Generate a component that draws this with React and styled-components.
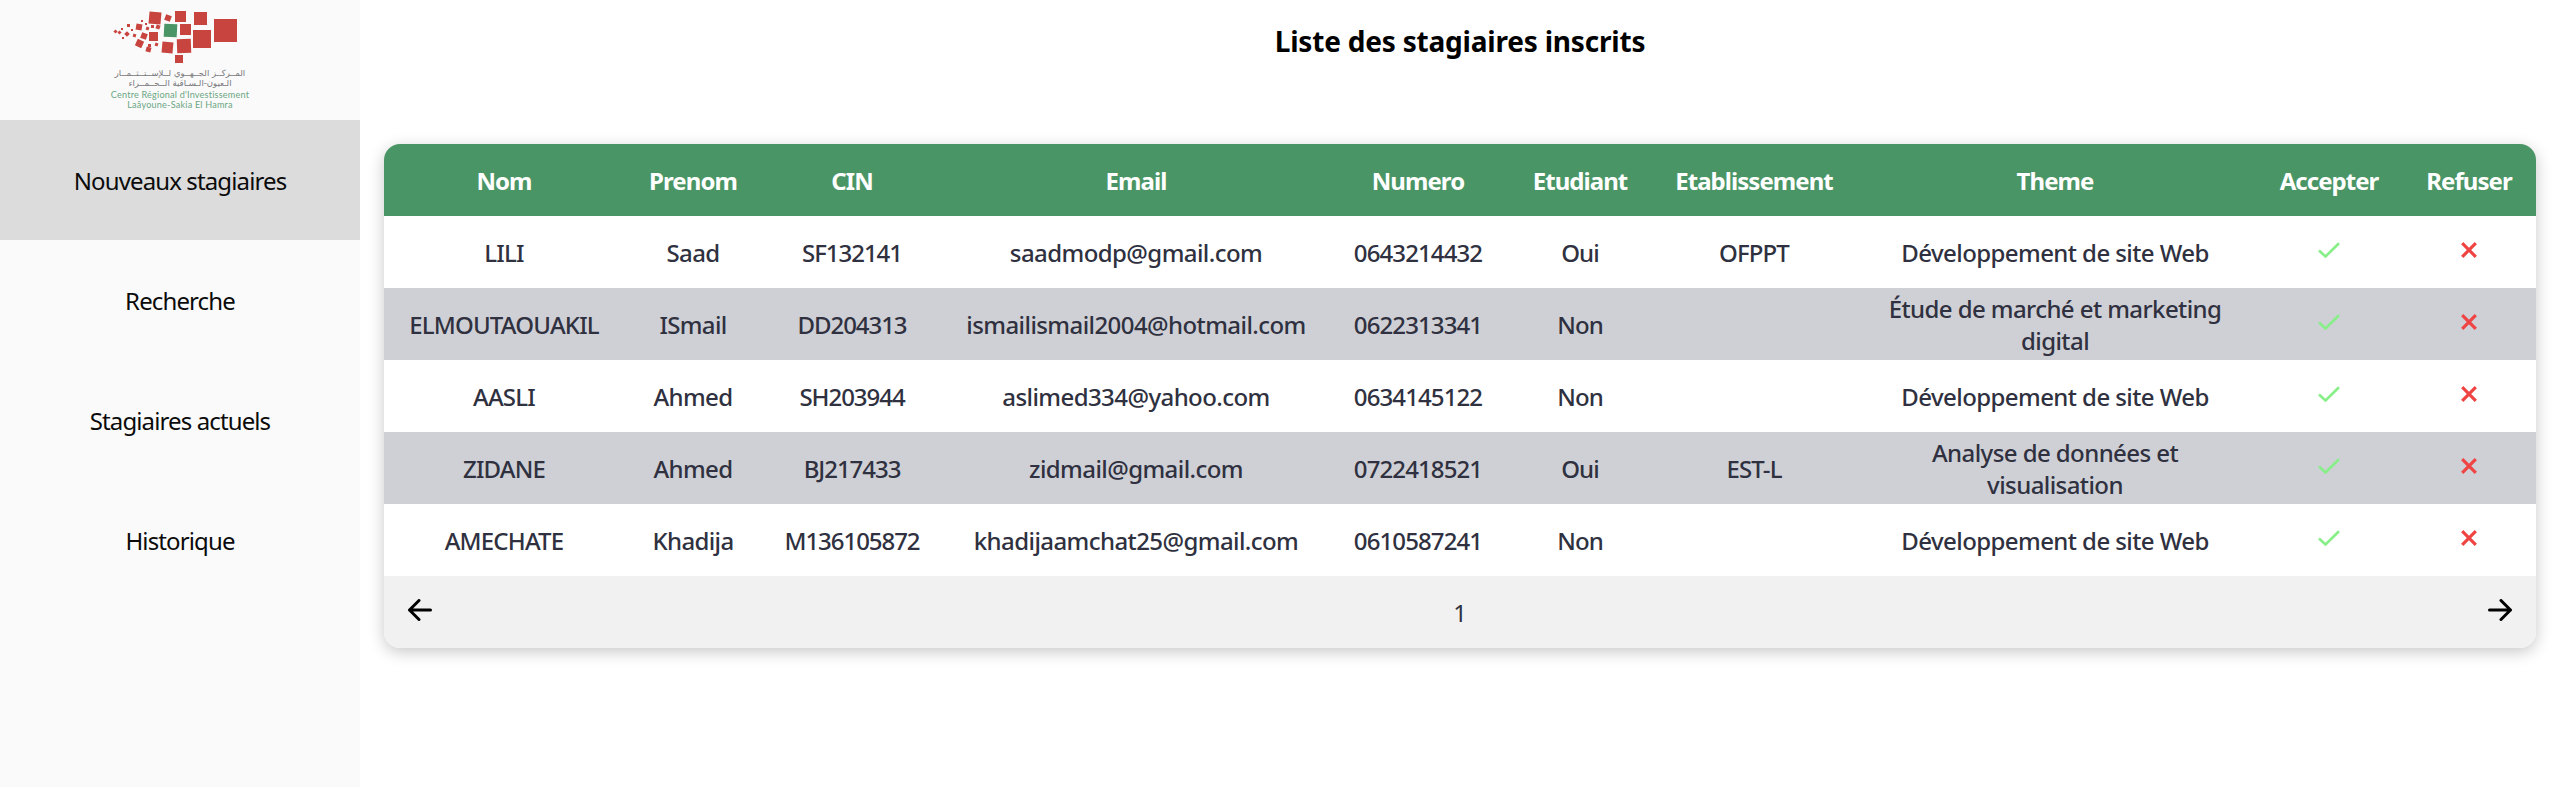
import React from "react";
import styled, { createGlobalStyle } from "styled-components";

const Global = createGlobalStyle`
  html, body { margin: 0; padding: 0; background: #fff; }
  body { font-family: "Noto Sans", "Open Sans", sans-serif; }
`;
const Page = styled.div`display: flex; width: 2560px; height: 787px; overflow: hidden;`;
const Sidebar = styled.aside`width: 360px; flex: none; background: #fafafa; display: flex; flex-direction: column;`;
const LogoBox = styled.div`height: 120px; display: flex; flex-direction: column; align-items: center; position: relative;`;
const ArabicLine = styled.div`
  font-family: "DejaVu Sans", sans-serif; font-size: 8.5px; line-height: 10px; color: #77777a; white-space: nowrap; direction: rtl;
  height: 10px;
`;
const LatinLine = styled.div`
  font-family: "Lato", sans-serif; font-size: 9.1px; line-height: 10px; color: #6aa682; white-space: nowrap; letter-spacing: 0.2px;
`;
const LogoText = styled.div`margin-top: 1px; display: flex; flex-direction: column; align-items: center; gap: 0;`;
const LatinBlock = styled.div`margin-top: 2px; display: flex; flex-direction: column; align-items: center;`;
const NavItem = styled.div`
  height: 120px; display: flex; align-items: center; justify-content: center; font-size: 24px; letter-spacing: -0.88px; color: #0b0b0b;
  background: ${p => p.$active ? "#dcdcdc" : "transparent"};
`;
const Main = styled.main`flex: 1; padding: 0 24px; display: flex; flex-direction: column; align-items: stretch;`;
const Title = styled.h1`margin: 0; height: 144px; padding-top: 21px; box-sizing: border-box; text-align: center; font-size: 28px; line-height: 40px; font-weight: 700; letter-spacing: -0.2px; color: #000;`;
const Card = styled.div`border-radius: 16px; overflow: hidden; box-shadow: 0 4px 16px rgba(0,0,0,.22); background: #fff;`;
const Table = styled.table`width: 2152px; table-layout: fixed; border-collapse: collapse; font-size: 24px;`;
const HeadRow = styled.tr`background: #4a9565; height: 72px;`;
const Th = styled.th`color: #fff; font-weight: 700; padding: 2px 0 0; text-align: center; line-height: 32px; letter-spacing: -0.95px;`;
const Row = styled.tr`height: 72px; background: ${p => p.$alt ? "#cfd0d6" : "#fff"};`;
const Td = styled.td`
  color: #2f3140; padding: 2px 16px 0; text-align: center; line-height: 32px; font-weight: 500;
  letter-spacing: ${p => p.$track}px; white-space: ${p => p.$wrap ? "normal" : "nowrap"};
`;
const IconCell = styled.td`padding: 0 0 4px; text-align: center; vertical-align: middle; line-height: 0;`;
const Footer = styled.div`height: 72px; background: #f1f1f1; display: flex; align-items: center; justify-content: space-between; padding: 0 24px; box-sizing: border-box; width: 100%;`;
const PageNum = styled.span`font-size: 24px; color: #2f3140;`;
const ArrowBtn = styled.span`display: flex; margin-top: -4px;`;

const widths = [240, 138, 180, 388, 176, 148, 200, 402, 146, 134];
const tracks = [-0.82, -0.65, -1.05, -0.58, -0.9, -0.9, -0.9, -0.58];
const heads = ["Nom","Prenom","CIN","Email","Numero","Etudiant","Etablissement","Theme","Accepter","Refuser"];
const rows = [
  ["LILI","Saad","SF132141","saadmodp@gmail.com","0643214432","Oui","OFPPT","Développement de site Web"],
  ["ELMOUTAOUAKIL","ISmail","DD204313","ismailismail2004@hotmail.com","0622313341","Non","","Étude de marché et marketing digital"],
  ["AASLI","Ahmed","SH203944","aslimed334@yahoo.com","0634145122","Non","","Développement de site Web"],
  ["ZIDANE","Ahmed","BJ217433","zidmail@gmail.com","0722418521","Oui","EST-L","Analyse de données et visualisation"],
  ["AMECHATE","Khadija","M136105872","khadijaamchat25@gmail.com","0610587241","Non","","Développement de site Web"],
];

const Check = () => (
  <svg width="22" height="16" viewBox="0 0 22 16" fill="none" stroke="#86ef88" strokeWidth="2.6">
    <path d="M1 8.5 L7.5 14.5 L21 1.2" />
  </svg>
);
const Cross = () => (
  <svg width="16" height="16" viewBox="0 0 16 16" fill="none" stroke="#ef4444" strokeWidth="3.2">
    <path d="M1.2 1.2 L14.8 14.8 M14.8 1.2 L1.2 14.8" />
  </svg>
);
const Arrow = ({ left }) => (
  <svg width="24" height="22" viewBox="0 0 24 22" fill="none" stroke="#000" strokeWidth="3" strokeLinecap="round" strokeLinejoin="round" style={left ? { transform: "scaleX(-1)" } : undefined}>
    <path d="M1.5 11 H22.5 M13 1.5 L22.5 11 L13 20.5" />
  </svg>
);

const squares = [
  [214,19,23,0,"#c8443f"],[193,30,18,0,"#c8443f"],[194,12,13,0,"#c8443f"],[175,11,11,0,"#c8443f"],
  [180,24,11,0,"#c8443f"],[177,39,14,-2,"#c8443f"],[162,42,11,5,"#c8443f"],[175,55,8,0,"#c8443f"],
  [164,24,13,3,"#4a9565"],[149,12,12,5,"#c8443f"],[149,32,9,0,"#c8443f"],[165,15,6,20,"#c8443f"],
  [136,40,7,25,"#c8443f"],[146,47,5,15,"#c8443f"],[141,33,6,20,"#c8443f"],[136,24,6,10,"#c8443f"],
  [148,44,3,0,"#c8443f"],[155,43,3,20,"#c8443f"],[146,27,3,20,"#c8443f"],[151,25,3,0,"#c8443f"],[156,25,4,20,"#c8443f"],
  [133,34,3,20,"#c8443f"],[125,32,4,45,"#c8443f"],[131,29,2,0,"#c8443f"],[127,24,3,0,"#c8443f"],[121,28,2,0,"#c8443f"],
  [118,31,3,45,"#c8443f"],[114,30,3,45,"#c8443f"],[122,37,2,0,"#c8443f"],[141,20,2,0,"#c8443f"],[145,23,2,0,"#c8443f"],
];

export default function App() {
  return (
    <Page>
      <Global />
      <Sidebar>
        <LogoBox>
          <svg width="360" height="67" viewBox="0 0 360 67" style={{ flex: "none" }}>
            {squares.map(([x, y, s, r, c], i) => (
              <rect key={i} x={x} y={y} width={s} height={s} fill={c} transform={`rotate(${r} ${x + s / 2} ${y + s / 2})`} />
            ))}
          </svg>
          <LogoText>
            <ArabicLine>المــركــز الجــهــوي لــلإســتــثــمــار</ArabicLine>
            <ArabicLine>الـعيون-الـسـاقية الــحــمــراء</ArabicLine>
            <LatinBlock>
              <LatinLine>Centre Régional d'Investissement</LatinLine>
              <LatinLine>Laâyoune-Sakia El Hamra</LatinLine>
            </LatinBlock>
          </LogoText>
        </LogoBox>
        <NavItem $active>Nouveaux stagiaires</NavItem>
        <NavItem>Recherche</NavItem>
        <NavItem>Stagiaires actuels</NavItem>
        <NavItem>Historique</NavItem>
      </Sidebar>
      <Main>
        <Title>Liste des stagiaires inscrits</Title>
        <Card>
          <Table>
            <colgroup>{widths.map((w, i) => <col key={i} width={w} />)}</colgroup>
            <thead>
              <HeadRow>{heads.map(h => <Th key={h}>{h}</Th>)}</HeadRow>
            </thead>
            <tbody>
              {rows.map((r, i) => (
                <Row key={i} $alt={i % 2 === 1}>
                  {r.map((c, j) => <Td key={j} $wrap={j === 7} $track={tracks[j]}>{c}</Td>)}
                  <IconCell><Check /></IconCell>
                  <IconCell><Cross /></IconCell>
                </Row>
              ))}
            </tbody>
          </Table>
          <Footer>
            <ArrowBtn><Arrow left /></ArrowBtn>
            <PageNum>1</PageNum>
            <ArrowBtn><Arrow /></ArrowBtn>
          </Footer>
        </Card>
      </Main>
    </Page>
  );
}
